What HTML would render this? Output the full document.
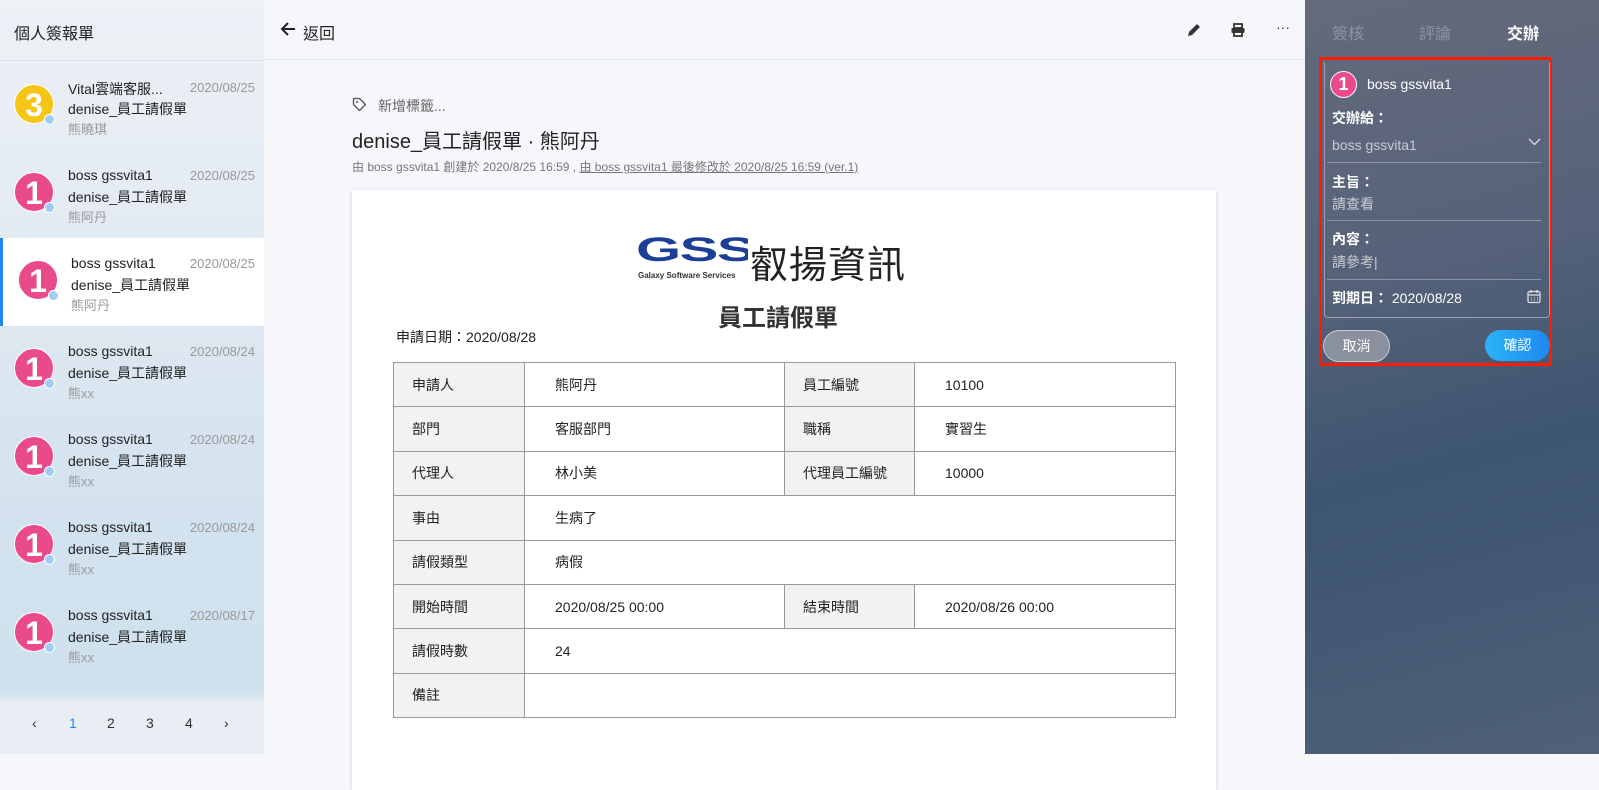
<!DOCTYPE html>
<html><head><meta charset="utf-8"><style>
*{box-sizing:border-box;margin:0;padding:0}
body{width:1599px;height:754px;overflow:hidden;font-family:"Liberation Sans","Noto Sans CJK TC",sans-serif;background:#f5f7fa;position:relative;color:#222}
.abs{position:absolute}
#left{left:0;top:0;width:264px;height:754px;background:linear-gradient(180deg,#eef1f6 0%,#dfe8f1 40%,#d2e2ee 70%,#cfe1ee 92%,#e9edf4 93%);}
.item{position:absolute;left:0;width:264px;height:88px}
.av{position:absolute;left:14px;top:22px;width:40px;height:40px;border-radius:50%;color:#fff;font-weight:bold;font-size:32px;line-height:40px;text-align:center;border:1.5px solid #fff}
.dot{position:absolute;left:44px;top:52px;width:11px;height:11px;border-radius:50%;background:#9fcdf7;border:1.5px solid #fff}
.t1{position:absolute;left:68px;top:17px;font-size:14px;color:#222}
.dt{position:absolute;right:9px;top:18px;font-size:13px;color:#999}
.t2{position:absolute;left:68px;top:37px;font-size:14px;color:#222}
.t3{position:absolute;left:68px;top:57px;font-size:13px;color:#999}
table{border-collapse:collapse;position:absolute;left:41px;top:172px;width:783px}
td{border:1px solid #999;height:44.4px;font-size:14px;padding-left:20px;color:#222}
td.h{background:#f2f2f2;padding-left:18px}
#right{left:1305px;top:0;width:294px;height:754px;background:linear-gradient(165deg,#656a7c 0%,#56627a 35%,#3d5570 60%,#455a74 80%,#506179 100%)}
.lbl{position:absolute;left:1332px;color:#fff;font-weight:bold;font-size:14px}
.val{position:absolute;left:1332px;color:#c8ccd4;font-size:14px}
.ln{position:absolute;left:1327px;width:214px;height:1px;background:#8a93a3}
</style></head><body>
<div id="left" class="abs">
 <div class="abs" style="left:14px;top:20px;font-size:16px;color:#222">個人簽報單</div>
 <div class="abs" style="left:0;top:60px;width:264px;height:1px;background:#dde2ea"></div>
 <div class="item" style="top:62px"><div class="av" style="background:#f5c518">3</div><div class="dot"></div><div class="t1">Vital雲端客服...</div><div class="dt">2020/08/25</div><div class="t2">denise_員工請假單</div><div class="t3">熊曉琪</div></div>
 <div class="item" style="top:150px"><div class="av" style="background:#e94b8a">1</div><div class="dot"></div><div class="t1">boss gssvita1</div><div class="dt">2020/08/25</div><div class="t2">denise_員工請假單</div><div class="t3">熊阿丹</div></div>
 <div class="item" style="top:238px;background:#fff;border-left:3px solid #1e88f0"><div class="av" style="background:#e94b8a;left:15px">1</div><div class="dot" style="left:45px"></div><div class="t1" style="left:68px">boss gssvita1</div><div class="dt">2020/08/25</div><div class="t2">denise_員工請假單</div><div class="t3">熊阿丹</div></div>
 <div class="item" style="top:326px"><div class="av" style="background:#e94b8a">1</div><div class="dot"></div><div class="t1">boss gssvita1</div><div class="dt">2020/08/24</div><div class="t2">denise_員工請假單</div><div class="t3">熊xx</div></div>
 <div class="item" style="top:414px"><div class="av" style="background:#e94b8a">1</div><div class="dot"></div><div class="t1">boss gssvita1</div><div class="dt">2020/08/24</div><div class="t2">denise_員工請假單</div><div class="t3">熊xx</div></div>
 <div class="item" style="top:502px"><div class="av" style="background:#e94b8a">1</div><div class="dot"></div><div class="t1">boss gssvita1</div><div class="dt">2020/08/24</div><div class="t2">denise_員工請假單</div><div class="t3">熊xx</div></div>
 <div class="item" style="top:590px"><div class="av" style="background:#e94b8a">1</div><div class="dot"></div><div class="t1">boss gssvita1</div><div class="dt">2020/08/17</div><div class="t2">denise_員工請假單</div><div class="t3">熊xx</div></div>
 <div class="abs" style="top:715px;left:0;width:264px;font-size:14px;color:#333">
  <span class="abs" style="left:32px">‹</span><span class="abs" style="left:69px;color:#1e88f0">1</span><span class="abs" style="left:107px">2</span><span class="abs" style="left:146px">3</span><span class="abs" style="left:185px">4</span><span class="abs" style="left:224px">›</span></div>
</div>
<div class="abs" style="left:264px;top:0;width:1041px;height:60px;border-bottom:1px solid #e3e7ee;background:#f5f7fa">
 <svg class="abs" style="left:16px;top:21px" width="16" height="16" viewBox="0 0 16 16"><path d="M15 8H2M8 2L2 8l6 6" fill="none" stroke="#222" stroke-width="2"/></svg>
 <div class="abs" style="left:39px;top:20px;font-size:16px;color:#222">返回</div>
 <svg class="abs" style="left:922px;top:22px" width="16" height="16" viewBox="0 0 16 16"><path d="M2 14l1-4 8-8 3 3-8 8z" fill="#333"/></svg>
 <svg class="abs" style="left:966px;top:22px" width="16" height="16" viewBox="0 0 16 16"><rect x="4" y="2" width="8" height="4" fill="none" stroke="#333" stroke-width="1.8"/><rect x="1.5" y="6" width="13" height="5" rx="1" fill="#333"/><rect x="4" y="10" width="8" height="4" fill="#fff" stroke="#333" stroke-width="1.8"/></svg>
 <div class="abs" style="left:1012px;top:22px;font-size:14px;color:#333;line-height:10px">···</div>
</div>
<svg class="abs" style="left:352px;top:97px" width="15" height="15" viewBox="0 0 15 15"><path d="M1.5 1.5h6l6 6-6 6-6-6z" fill="none" stroke="#555" stroke-width="1.3" stroke-linejoin="round"/><circle cx="5" cy="5" r="1" fill="#555"/></svg>
<div class="abs" style="left:378px;top:96px;font-size:14px;color:#666">新增標籤...</div>
<div class="abs" style="left:352px;top:125px;font-size:20px;color:#222">denise_員工請假單 · 熊阿丹</div>
<div class="abs" style="left:352px;top:158px;font-size:12px;color:#777">由 boss gssvita1 創建於 2020/8/25 16:59 , <u>由 boss gssvita1 最後修改於 2020/8/25 16:59 (ver.1)</u></div>
<div class="abs" style="left:352px;top:190px;width:864px;height:600px;background:#fff;box-shadow:0 1px 4px rgba(0,0,0,.15)">
 <div class="abs" style="left:284px;top:43px;width:112px;height:36px;overflow:hidden"><div style="font-size:40px;font-weight:bold;color:#1a3f94;transform:scale(1.45,0.85);transform-origin:0 0;letter-spacing:-1px;line-height:40px">GSS</div></div>
 <div class="abs" style="left:286px;top:81px;font-size:8px;color:#333;font-weight:bold">Galaxy Software Services</div>
 <div class="abs" style="left:398px;top:44px;font-size:38px;color:#222;letter-spacing:1px">叡揚資訊</div>
 <div class="abs" style="left:366px;top:108px;font-size:24px;font-weight:bold;color:#333">員工請假單</div>
 <div class="abs" style="left:44px;top:137px;font-size:14px">申請日期：2020/08/28</div>
 <table>
  <tr><td class="h" style="width:131px">申請人</td><td style="width:260px;padding-left:30px">熊阿丹</td><td class="h" style="width:130px">員工編號</td><td style="padding-left:30px">10100</td></tr>
  <tr><td class="h">部門</td><td style="padding-left:30px">客服部門</td><td class="h">職稱</td><td style="padding-left:30px">實習生</td></tr>
  <tr><td class="h">代理人</td><td style="padding-left:30px">林小美</td><td class="h">代理員工編號</td><td style="padding-left:30px">10000</td></tr>
  <tr><td class="h">事由</td><td colspan="3" style="padding-left:30px">生病了</td></tr>
  <tr><td class="h">請假類型</td><td colspan="3" style="padding-left:30px">病假</td></tr>
  <tr><td class="h">開始時間</td><td style="padding-left:30px">2020/08/25 00:00</td><td class="h">結束時間</td><td style="padding-left:30px">2020/08/26 00:00</td></tr>
  <tr><td class="h">請假時數</td><td colspan="3" style="padding-left:30px">24</td></tr>
  <tr><td class="h">備註</td><td colspan="3"></td></tr>
 </table>
</div>
<div id="right" class="abs"></div>
<div class="abs" style="left:1332px;top:20px;font-size:16px;color:#8e94a2">簽核</div>
<div class="abs" style="left:1419px;top:20px;font-size:16px;color:#8e94a2">評論</div>
<div class="abs" style="left:1507px;top:20px;font-size:16px;color:#fff;font-weight:bold">交辦</div>
<div class="abs" style="left:1319px;top:57px;width:233px;height:309px;border:3px solid #ff1a00"></div>
<div class="abs" style="left:1324px;top:62px;width:226px;height:256px;border:1px solid #9aa3b3;border-top:none;border-radius:0 0 4px 4px"></div>
<div class="abs" style="left:1330px;top:71px;width:27px;height:27px;border-radius:50%;background:#e94b8a;border:1.5px solid #fff;color:#fff;font-weight:bold;font-size:18px;line-height:24px;text-align:center">1</div>
<div class="abs" style="left:1367px;top:76px;font-size:14px;color:#fff">boss gssvita1</div>
<div class="lbl" style="top:108px">交辦給：</div>
<div class="val" style="top:137px">boss gssvita1</div>
<svg class="abs" style="left:1528px;top:138px" width="13" height="8" viewBox="0 0 13 8"><path d="M1 1l5.5 5.5L12 1" fill="none" stroke="#ddd" stroke-width="1.3"/></svg>
<div class="ln" style="top:162px"></div>
<div class="lbl" style="top:172px">主旨：</div>
<div class="val" style="top:194px">請查看</div>
<div class="ln" style="top:220px"></div>
<div class="lbl" style="top:229px">內容：</div>
<div class="val" style="top:252px">請參考|</div>
<div class="ln" style="top:279px"></div>
<div class="lbl" style="top:288px">到期日： <span style="font-weight:normal">2020/08/28</span></div>
<svg class="abs" style="left:1527px;top:289px" width="14" height="15" viewBox="0 0 14 15"><rect x="1" y="2.5" width="12" height="11" rx="1.5" fill="none" stroke="#ddd" stroke-width="1.3"/><path d="M4 1v3M10 1v3M1 6h12" stroke="#ddd" stroke-width="1.3"/><path d="M4 9h1M7 9h1M10 9h1M4 11h1M7 11h1M10 11h1" stroke="#ddd"/></svg>
<div class="abs" style="left:1323px;top:330px;width:67px;height:32px;border-radius:16px;background:#8a909e;border:1px solid #c5cad3;color:#fff;font-size:14px;text-align:center;line-height:30px">取消</div>
<div class="abs" style="left:1485px;top:330px;width:65px;height:31px;border-radius:16px;background:linear-gradient(90deg,#2bb4f5,#1e88f0);color:#fff;font-size:14px;text-align:center;line-height:31px">確認</div>
</body></html>
